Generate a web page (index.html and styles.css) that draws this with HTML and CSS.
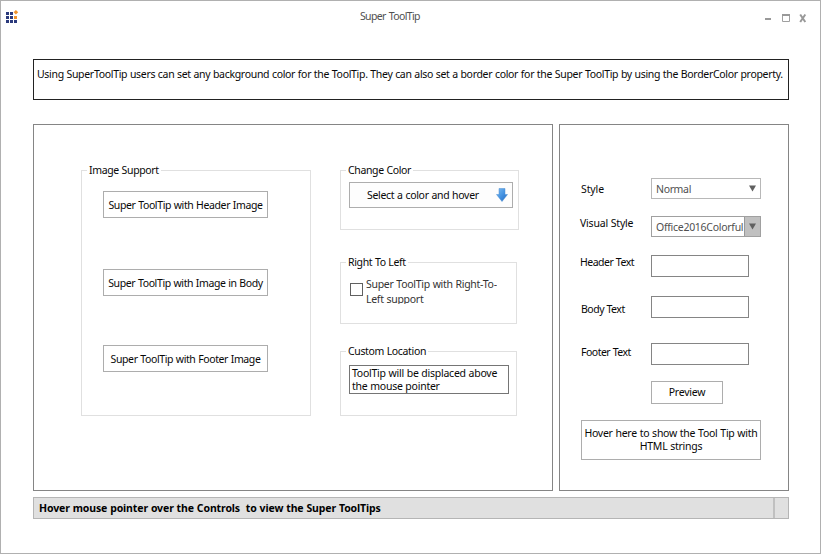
FILE: index.html
```html
<!DOCTYPE html>
<html lang="en">
<head>
<meta charset="utf-8">
<title>Super ToolTip</title>
<link rel="stylesheet" href="styles.css">
</head>
<body>
<div class="window">
  <header class="titlebar">
    <svg class="logo" width="14" height="14" viewBox="0 0 14 14">
      <g fill="#2b3a7c"><rect x="0" y="2" width="3" height="3"/><rect x="4" y="2" width="3" height="3"/><rect x="0" y="6" width="3" height="3"/><rect x="4" y="6" width="3" height="3"/><rect x="0" y="10" width="3" height="3"/><rect x="4" y="10" width="3" height="3"/><rect x="8" y="10" width="3" height="3"/></g>
      <rect x="8" y="6" width="3" height="3" fill="#f0932b"/><path d="M9.900 0L12.200 2.300L9.900 4.600L7.600 2.300Z" fill="#f0932b"/>
    </svg>
    <h1 class="title">Super ToolTip</h1>
    <svg class="controls" width="44" height="10" viewBox="0 0 44 10">
      <path d="M1 6H7" stroke="#999" stroke-width="2"/>
      <path d="M18.500 2V8.500H25.500V2" fill="none" stroke="#a0a0a0"/><path d="M18 2H26" stroke="#999" stroke-width="2"/>
      <path d="M36.200 1.500L41.300 9M41.300 1.500L36.200 9" stroke="#999" stroke-width="2"/>
    </svg>
  </header>
  <p class="description">Using SuperToolTip users can set any background color for the ToolTip. They can also set a border color for the Super ToolTip by using the BorderColor property.</p>
  <main class="panels">
    <section class="panel samples">
      <div class="group images">
        <h2 class="legend">Image Support</h2>
        <button class="btn head">Super ToolTip with Header Image</button>
        <button class="btn body">Super ToolTip with Image in Body</button>
        <button class="btn foot">Super ToolTip with Footer Image</button>
      </div>
      <div class="side">
        <div class="group color">
          <h2 class="legend">Change Color</h2>
          <button class="btn picker"><span class="picker-text">Select a color and hover</span>
            <svg width="12" height="14" viewBox="0 0 12 14"><defs><linearGradient id="arrow" x1="0" x2="1" y1="0" y2="1"><stop offset="0" stop-color="#7dbcf0"/><stop offset=".5" stop-color="#4593e2"/><stop offset="1" stop-color="#2467bd"/></linearGradient></defs><path d="M3 .5H9V6.500H11.500L6 13.500L.5 6.500H3Z" fill="url(#arrow)" stroke="#4d8fd0" stroke-width=".5"/></svg>
          </button>
        </div>
        <div class="group rtl">
          <h2 class="legend">Right To Left</h2>
          <label class="check"><span class="box"></span><span class="check-text">Super ToolTip with Right-To-<br>Left support</span></label>
        </div>
        <div class="group location">
          <h2 class="legend">Custom Location</h2>
          <div class="note">ToolTip will be displaced above<br>the mouse pointer</div>
        </div>
      </div>
    </section>
    <section class="panel settings">
      <div class="row r1"><label class="l1">Style</label><div class="combo"><span>Normal</span><i class="drop"><svg width="7" height="7" viewBox="0 0 7 7"><path d="M0 .5H7L3.500 6.500Z"/></svg></i></div></div>
      <div class="row r2"><label class="l2">Visual Style</label><div class="combo active"><span>Office2016Colorful</span><i class="drop"><svg width="7" height="7" viewBox="0 0 7 7"><path d="M0 .5H7L3.500 6.500Z"/></svg></i></div></div>
      <div class="row r3"><label class="l3">Header Text</label><div class="input"></div></div>
      <div class="row r4"><label class="l4">Body Text</label><div class="input"></div></div>
      <div class="row r5"><label class="l5">Footer Text</label><div class="input"></div></div>
      <button class="btn preview">Preview</button>
      <button class="btn html">Hover here to show the Tool Tip with<br>HTML strings</button>
    </section>
  </main>
  <footer class="status"><span class="status-text">Hover mouse pointer over the Controls&nbsp; to view the Super ToolTips</span><span class="grip"></span></footer>
</div>
</body>
</html>
```
FILE: styles.css
```css
* { box-sizing: border-box; }
body { margin: 0; background: #fff; color: #080808; font: 10.5px/13px "Noto Sans", "Open Sans", sans-serif; letter-spacing: -.25px; word-spacing: .3px; }
h1, h2, p { margin: 0; font-size: inherit; font-weight: 400; }
.window { width: 821px; height: 554px; border: 1px solid #b0b0b0; padding-left: 32px; overflow: hidden; white-space: nowrap; }
.titlebar { height: 58px; margin-left: -27px; display: flex; align-items: flex-start; }
.logo { margin-top: 9px; }
.title { margin: 9px 0 0 340px; width: 62px; color: #505050; letter-spacing: -.65px; word-spacing: 1px; }
.controls { margin: 12px 0 0 342px; }
.description { width: 756px; height: 41px; border: 1px solid #222; padding: 8px 0 0 3px; letter-spacing: -.31px; word-spacing: .25px; }
.panels { display: flex; gap: 6px; margin-top: 24px; height: 367px; }
.panel { border: 1px solid #858585; }
.samples { width: 520px; display: flex; padding: 45px 0 0 47px; gap: 29px; }
.group { border: 1px solid #e0e0e0; display: flex; flex-direction: column; align-items: flex-start; }
.legend { margin: -7px 0 0 5px; padding: 0 2px; background: #fff; height: 13px; letter-spacing: -.35px; }
.images { width: 230px; height: 246px; }
.btn { font: inherit; letter-spacing: inherit; word-spacing: inherit; color: inherit; background: #fff; border: 1px solid #adadad; padding: 0; white-space: nowrap; border-radius: 0; }
.images .btn { width: 165px; height: 27px; margin-left: 21px; padding-top: 2px; letter-spacing: -.38px; }
.images .head { margin-top: 14px; }
.images .body { margin-top: 51px; }
.images .foot { margin-top: 49px; }
.color { width: 179px; height: 60px; }
.picker { width: 164px; height: 26px; margin: 5px 0 0 8px; display: flex; align-items: center; justify-content: space-between; padding: 0 4px 0 17px; background: #fdfdfd; letter-spacing: -.3px; }
.rtl { width: 177px; height: 62px; margin-top: 32px; }
.check { display: flex; margin: 8px 0 0 9px; }
.box { width: 13px; height: 13px; border: 1px solid #606060; margin: 6px 3px 0 0; }
.check-text { line-height: 15px; height: 27px; overflow: hidden; color: #333; letter-spacing: -.28px; }
.location { width: 177px; height: 65px; margin-top: 27px; }
.note { width: 160px; height: 29px; margin: 7px 0 0 8px; border: 1px solid #757575; padding: 1px 0 0 2px; }
.settings { width: 230px; padding: 53px 0 0 21px; }
.row { display: grid; grid-template-columns: 70px auto; justify-content: start; align-items: start; }
.r1 { height: 38px; }
.r2 { height: 39px; }
.r3 { height: 41px; }
.r4 { height: 47px; }
.r5 { height: 38px; }
.l1 { margin-top: 5px; letter-spacing: -.1px; }
.l2 { margin: 1px 0 0 -1px; letter-spacing: -.2px; }
.l3 { margin: 1px 0 0 -1px; letter-spacing: -.5px; }
.l4 { margin-top: 7px; letter-spacing: -.5px; }
.l5 { margin-top: 3px; letter-spacing: -.5px; }
.combo { width: 110px; height: 21px; border: 1px solid #b8b8b8; display: flex; justify-content: space-between; padding-left: 4px; line-height: 20px; color: #505050; }
.combo span { letter-spacing: -.35px; }
.active span { letter-spacing: -.28px; }
.drop { width: 16px; flex: none; display: flex; align-items: center; justify-content: center; fill: #606060; }
.active { border-color: #a0a0a0; }
.active .drop { background: #c0c0c0; border-left: 1px solid #999; }
.input { width: 98px; height: 22px; border: 1px solid #858585; }
.preview { display: block; width: 72px; height: 23px; margin-left: 70px; }
.html { display: block; width: 180px; height: 40px; margin-top: 16px; }
.status { width: 756px; height: 22px; margin-top: 6px; border: 1px solid #b5b5b5; background: #e0e0e0; display: flex; justify-content: space-between; padding-left: 5px; font-weight: 700; line-height: 20px; color: #000; }
.status-text { letter-spacing: -.12px; }
.grip { width: 15px; border-left: 2px solid #c0c0c0; }
```
